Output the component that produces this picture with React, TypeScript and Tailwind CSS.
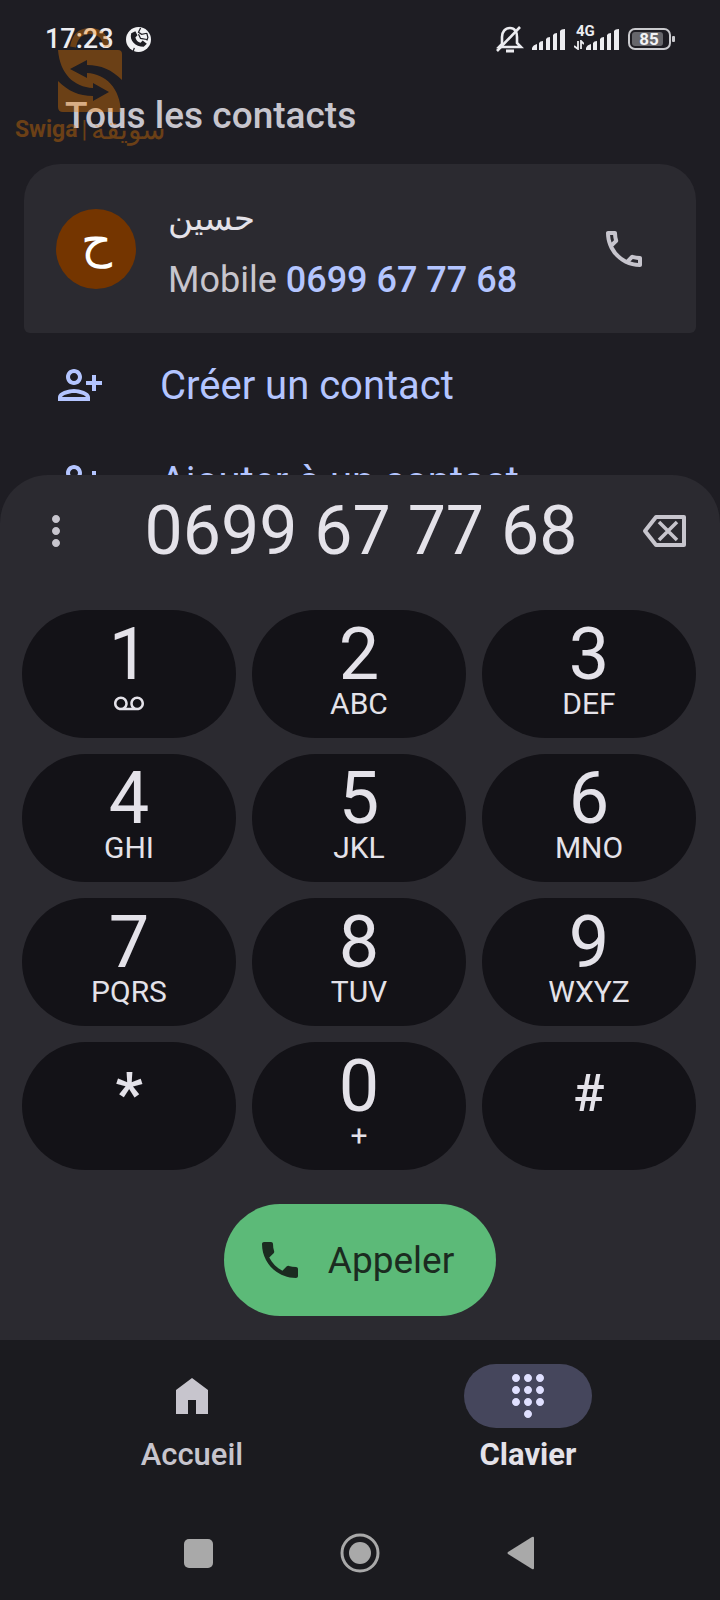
import type { ReactNode } from "react";
import {
  MdDialpad,
  MdMoreVert,
  MdOutlinePersonAddAlt1,
  MdOutlinePhone,
  MdPhone,
  MdVoicemail,
} from "react-icons/md";

interface DialKey {
  digit: string;
  sub?: ReactNode;
}

const keys: DialKey[] = [
  { digit: "1", sub: <MdVoicemail size={30} aria-hidden /> },
  { digit: "2", sub: "ABC" },
  { digit: "3", sub: "DEF" },
  { digit: "4", sub: "GHI" },
  { digit: "5", sub: "JKL" },
  { digit: "6", sub: "MNO" },
  { digit: "7", sub: "PQRS" },
  { digit: "8", sub: "TUV" },
  { digit: "9", sub: "WXYZ" },
  { digit: "*" },
  { digit: "0", sub: "+" },
  { digit: "#" },
];

function SignalBars() {
  return (
    <svg width="34" height="22" viewBox="0 0 34 22" fill="currentColor" aria-hidden>
      <path d="M0 22v-2q1-3 5-4v6zM7 22v-7q1-2 4-2v9zM14 22V11q1-2 4-2v13zM21 22V7q1-2 4-2v17zM28 22V3q1-2 5-2v21z" />
    </svg>
  );
}

function StatusBar() {
  return (
    <header className="flex h-[78px] items-center justify-between pr-[44px] pl-[45px] text-[#ececf0]">
      <div className="flex items-center gap-3">
        <span className="text-[27px] leading-8 font-medium">17:23</span>
        <svg width="25" height="25" viewBox="0 0 24 24" aria-hidden>
          <circle cx="12" cy="12" r="12" fill="#f2f2f4" />
          <path
            d="M5 6c-2 7 4 13 12 13l3-3-4-3-2 2c-3-1-4-2-5-5l2-2-2-4z"
            fill="#1e1d23"
          />
          <path
            d="M14 1l-2 4 3 2 5-1M12 7l2 4 6 1M20 6l1 4-1 3M8 20l-1 3"
            stroke="#1e1d23"
            strokeWidth="1.2"
            fill="none"
          />
        </svg>
      </div>
      <div className="flex items-center gap-2">
        <svg width="28" height="30" viewBox="0 0 28 30" fill="none" stroke="currentColor" strokeWidth="2.6" aria-hidden>
          <path d="M3 23h22l-4-4v-6c0-5-2-9-7-9s-8 4-8 9v7z" />
          <path d="M1 27L24 3" />
          <path d="M10 27h8" strokeWidth="3" />
        </svg>
        <SignalBars />
        <div className="relative">
          <span className="absolute -top-[3px] left-[2px] text-[15px] leading-3 font-bold">4G</span>
          <div className="flex items-end gap-[2px]">
            <svg width="10" height="10" viewBox="0 0 10 10" fill="none" stroke="currentColor" strokeWidth="1.8" aria-hidden>
              <path d="M4 1v8L0 6M7 9V1l3 3" />
            </svg>
            <SignalBars />
          </div>
        </div>
        <svg width="48" height="22" viewBox="0 0 48 22" role="img" aria-label="Batterie 85 %">
          <rect x="1" y="1" width="41" height="20" rx="6" fill="none" stroke="#c9c9cd" strokeWidth="2" />
          <rect x="4" y="4" width="31" height="14" rx="3" fill="#66666b" />
          <rect x="44" y="8" width="3" height="6" rx="1" fill="#c9c9cd" />
          <text x="21" y="17" textAnchor="middle" fontSize="17" fontWeight="700" fill="#f2f2f4">
            85
          </text>
        </svg>
      </div>
    </header>
  );
}

function Watermark() {
  return (
    <div className="pointer-events-none absolute top-7 left-[15px] flex w-[150px] flex-col items-center text-[#fa8100] opacity-35">
      <svg width="64" height="84" viewBox="0 0 64 84" fill="currentColor" aria-hidden>
        <path d="M15 19C17 7 24 3 32 3s15 4 17 16" fill="none" stroke="currentColor" strokeWidth="6" />
        <path
          transform="translate(0 22)"
          d="M0 0H60q4 0 4 4V30C54 20 43 15 29 15V10L12 19l17 9v-5C48 24 62 38 63 62H5q-5 0-5-5V31C10 41 21 46 35 46v5l16-9-16-9v5C16 37 2 24 0 0z"
        />
      </svg>
      <div className="flex items-center gap-1 pt-[2px] text-[23px] leading-8 font-bold whitespace-nowrap">
        <span>Swiga</span>
        <span className="font-normal">|</span>
        <span dir="rtl" className="text-[28px] font-medium">
          سويقة
        </span>
      </div>
    </div>
  );
}

function ContactAction({ label }: { label: string }) {
  return (
    <button type="button" className="flex h-24 w-full items-center gap-14 pl-14 text-[#b4c5ff]">
      <MdOutlinePersonAddAlt1 size={48} aria-hidden />
      <span className="pt-[2px] text-[40px] leading-[48px]">{label}</span>
    </button>
  );
}

function KeyButton({ digit, sub }: DialKey) {
  if (!sub) {
    return (
      <button
        type="button"
        className={`flex h-32 items-center justify-center rounded-full bg-[#131217] pb-6 text-[#e4e2e9] ${
          digit === "*" ? "text-[60px] leading-[72px] font-bold" : "text-[52px] font-medium"
        }`}
      >
        {digit}
      </button>
    );
  }
  return (
    <button
      type="button"
      className="flex h-32 flex-col items-center rounded-full bg-[#131217] pt-[13px] text-[#e4e2e9]"
    >
      <span className="text-[72px] leading-[64px]">{digit}</span>
      <span className="flex h-[34px] items-center text-[30px] leading-[34px]">{sub}</span>
    </button>
  );
}

export default function App() {
  return (
    <div className="relative flex min-h-screen flex-col bg-[#1e1d23] font-['Roboto','Noto_Sans',sans-serif]">
      <StatusBar />

      <main className="flex flex-col">
        <h1 className="px-[65px] pt-[14px] pb-6 text-[37px] leading-[48px] font-medium text-[#c7c5cd]">
          Tous les contacts
        </h1>

        <section className="mx-6 flex h-[169px] items-center rounded-t-[36px] rounded-b-md bg-[#2b2a30] pr-12 pl-8">
          <div className="flex size-20 shrink-0 items-center justify-center rounded-full bg-[#743500] pb-4 text-[48px] leading-[56px] text-white">
            ح
          </div>
          <div className="ml-8 flex flex-1 flex-col items-start">
            <span dir="rtl" className="text-[34px] leading-[52px] text-[#e4e2e9]">
              حسين
            </span>
            <p className="pt-[10px] text-[36px] leading-[52px] text-[#c7c5cd]">
              Mobile <span className="font-medium text-[#b4c5ff]">0699 67 77 68</span>
            </p>
          </div>
          <button type="button" aria-label="Appeler حسين" className="text-[#c7c5cd]">
            <MdOutlinePhone size={48} />
          </button>
        </section>

        <div className="pt-1">
          <ContactAction label="Créer un contact" />
          <ContactAction label="Ajouter à un contact" />
        </div>

        <section className="relative -mt-[54px] flex flex-col rounded-t-[48px] bg-[#2b2a30] pb-6">
          <div className="flex h-28 items-center justify-between px-8">
            <button type="button" aria-label="Plus d'options" className="text-[#c7c5cd]">
              <MdMoreVert size={48} />
            </button>
            <output className="text-[68px] leading-[80px] whitespace-nowrap text-[#e4e2e9]">0699 67 77 68</output>
            <button type="button" aria-label="Effacer" className="text-[#c7c5cd]">
              <svg width="46" height="34" viewBox="0 0 46 34" fill="none" stroke="currentColor" strokeWidth="4">
                <path d="M14 3h28v28H14L3 17z" strokeLinejoin="round" />
                <path d="M17 8l18 18M35 8L17 26" strokeWidth="3.5" />
              </svg>
            </button>
          </div>

          <div className="mt-[23px] grid grid-cols-3 gap-4 pr-6 pl-[22px]">
            {keys.map((key) => (
              <KeyButton key={key.digit} {...key} />
            ))}
          </div>

          <button
            type="button"
            className="mt-[34px] flex h-28 items-center gap-6 self-center rounded-full bg-[#5cba78] pr-[42px] pl-8 text-[37px] text-[#1b2b20]"
          >
            <MdPhone size={48} aria-hidden />
            <span className="pt-[2px]">Appeler</span>
          </button>
        </section>
      </main>

      <footer className="flex-1 bg-[#1b1b1f]">
        <nav className="grid grid-cols-2 px-6 pt-6 text-[31px] leading-9">
          <a href="#accueil" className="flex flex-col items-center gap-[9px] font-medium text-[#c7c5cd]">
            <span className="flex h-16 w-32 items-center justify-center">
              <svg width="32" height="36" viewBox="0 0 32 36" fill="currentColor" aria-hidden>
                <path d="M16 0l16 12v24H20V22h-8v14H0V12z" />
              </svg>
            </span>
            Accueil
          </a>
          <a
            href="#clavier"
            aria-current="page"
            className="flex flex-col items-center gap-[9px] font-bold text-[#e4e2e9]"
          >
            <span className="flex h-16 w-32 items-center justify-center rounded-full bg-[#45465c] text-[#e0e0ff]">
              <MdDialpad size={48} aria-hidden />
            </span>
            Clavier
          </a>
        </nav>

        <div className="mt-[60px] grid grid-cols-3 items-center px-[118px] text-[#a9a9a9]">
          <button type="button" aria-label="Applications récentes" className="flex justify-center">
            <span className="size-[29px] rounded-[5px] bg-current" />
          </button>
          <button type="button" aria-label="Écran d'accueil" className="flex justify-center">
            <svg width="40" height="40" viewBox="0 0 40 40" aria-hidden>
              <circle cx="20" cy="20" r="18" fill="none" stroke="currentColor" strokeWidth="3" />
              <circle cx="20" cy="20" r="11" fill="currentColor" />
            </svg>
          </button>
          <button type="button" aria-label="Retour" className="flex justify-center">
            <svg width="28" height="34" viewBox="0 0 28 34" fill="currentColor" aria-hidden>
              <path d="M27 2v30q0 2-2 1L1 18q-1-1 0-2L25 1q2-1 2 1z" />
            </svg>
          </button>
        </div>
      </footer>

      <Watermark />
    </div>
  );
}
